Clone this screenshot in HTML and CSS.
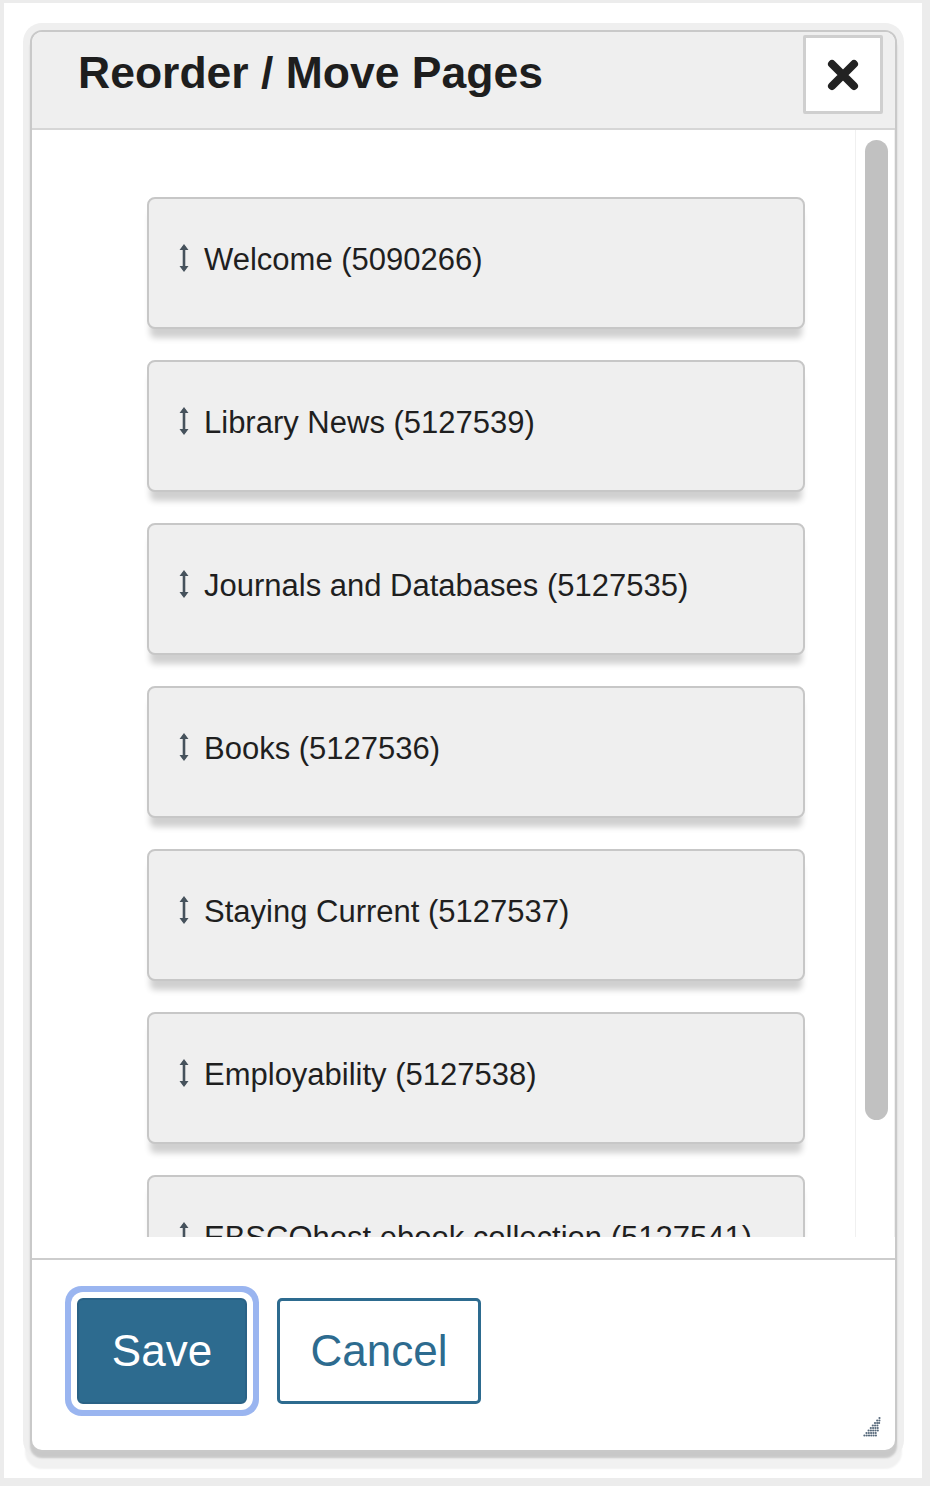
FILE: index.html
```html
<!DOCTYPE html>
<html lang="en">
<head>
<meta charset="utf-8">
<title>Reorder / Move Pages</title>
<link rel="stylesheet" href="styles.css">
</head>
<body>
<div class="frame">
  <div class="dialog">
    <div class="titlebar">
      <h1 class="title">Reorder / Move Pages</h1>
      <button class="close" aria-label="Close">
        <svg width="32" height="32" viewBox="0 0 32 32"><path d="M5 5 L27 27 M27 5 L5 27" stroke="#222" stroke-width="8" stroke-linecap="round" fill="none"/></svg>
      </button>
    </div>
    <div class="scrollarea">
      <ul class="list">
        <li class="item"><svg class="grip" width="12" height="30" viewBox="0 0 12 30"><path d="M6 3 V27" stroke="#46525c" stroke-width="2.6"/><path d="M1.5 7 L6 1 L10.5 7 Z M1.5 23 L6 29 L10.5 23 Z" fill="#46525c"/></svg><span>Welcome (5090266)</span></li>
        <li class="item"><svg class="grip" width="12" height="30" viewBox="0 0 12 30"><path d="M6 3 V27" stroke="#46525c" stroke-width="2.6"/><path d="M1.5 7 L6 1 L10.5 7 Z M1.5 23 L6 29 L10.5 23 Z" fill="#46525c"/></svg><span>Library News (5127539)</span></li>
        <li class="item"><svg class="grip" width="12" height="30" viewBox="0 0 12 30"><path d="M6 3 V27" stroke="#46525c" stroke-width="2.6"/><path d="M1.5 7 L6 1 L10.5 7 Z M1.5 23 L6 29 L10.5 23 Z" fill="#46525c"/></svg><span>Journals and Databases (5127535)</span></li>
        <li class="item"><svg class="grip" width="12" height="30" viewBox="0 0 12 30"><path d="M6 3 V27" stroke="#46525c" stroke-width="2.6"/><path d="M1.5 7 L6 1 L10.5 7 Z M1.5 23 L6 29 L10.5 23 Z" fill="#46525c"/></svg><span>Books (5127536)</span></li>
        <li class="item"><svg class="grip" width="12" height="30" viewBox="0 0 12 30"><path d="M6 3 V27" stroke="#46525c" stroke-width="2.6"/><path d="M1.5 7 L6 1 L10.5 7 Z M1.5 23 L6 29 L10.5 23 Z" fill="#46525c"/></svg><span>Staying Current (5127537)</span></li>
        <li class="item"><svg class="grip" width="12" height="30" viewBox="0 0 12 30"><path d="M6 3 V27" stroke="#46525c" stroke-width="2.6"/><path d="M1.5 7 L6 1 L10.5 7 Z M1.5 23 L6 29 L10.5 23 Z" fill="#46525c"/></svg><span>Employability (5127538)</span></li>
        <li class="item"><svg class="grip" width="12" height="30" viewBox="0 0 12 30"><path d="M6 3 V27" stroke="#46525c" stroke-width="2.6"/><path d="M1.5 7 L6 1 L10.5 7 Z M1.5 23 L6 29 L10.5 23 Z" fill="#46525c"/></svg><span>EBSCOhost ebook collection (5127541)</span></li>
      </ul>
      <div class="scrollbar"><div class="thumb"></div></div>
    </div>
    <div class="gap"></div>
    <div class="footer">
      <button class="btn save">Save</button>
      <button class="btn cancel">Cancel</button>
    </div>
    <svg class="resize" width="22" height="22" viewBox="0 0 22 22">
      <g fill="#56687a">
        <circle cx="18.5" cy="2" r="1.1"/>
        <circle cx="16.2" cy="4.5" r="1.1"/><circle cx="18.4" cy="4.5" r="1.1"/>
        <circle cx="14" cy="7" r="1.1"/><circle cx="16.2" cy="7" r="1.1"/><circle cx="18.1" cy="7" r="1.1"/>
        <circle cx="11.8" cy="9.5" r="1.1"/><circle cx="14.1" cy="9.5" r="1.1"/><circle cx="16.4" cy="9.5" r="1.1"/>
        <circle cx="9.8" cy="12" r="1.1"/><circle cx="12.1" cy="12" r="1.1"/><circle cx="14.4" cy="12" r="1.1"/><circle cx="16.7" cy="12" r="1.1"/>
        <circle cx="7.6" cy="14.5" r="1.1"/><circle cx="9.9" cy="14.5" r="1.1"/><circle cx="12.2" cy="14.5" r="1.1"/><circle cx="14.5" cy="14.5" r="1.1"/><circle cx="16.8" cy="14.5" r="1.1"/>
        <circle cx="5.5" cy="17" r="1.1"/><circle cx="7.8" cy="17" r="1.1"/><circle cx="10.1" cy="17" r="1.1"/><circle cx="12.4" cy="17" r="1.1"/><circle cx="14.7" cy="17" r="1.1"/>
        <circle cx="3.4" cy="19.5" r="1.1"/><circle cx="5.7" cy="19.5" r="1.1"/><circle cx="8" cy="19.5" r="1.1"/><circle cx="10.3" cy="19.5" r="1.1"/><circle cx="12.6" cy="19.5" r="1.1"/><circle cx="14.9" cy="19.5" r="1.1"/>
      </g>
    </svg>
  </div>
</div>
</body>
</html>
```
FILE: styles.css
```css
* { box-sizing: border-box; }
html, body { margin: 0; }
body {
  background: #ececec;
  padding: 3px 8px 8px 4px;
  font-family: "Liberation Sans", Arial, Helvetica, sans-serif;
  color: #1f1f1f;
}
.frame {
  background: #ffffff;
  height: 1475px;
  padding: 27px 0 0 26px;
}
.dialog {
  position: relative;
  width: 867px;
  height: 1422px;
  border: 2px solid #c9c9c9;
  border-radius: 12px;
  background: #ffffff;
  display: flex;
  flex-direction: column;
  box-shadow: 0 6px 2px rgba(0, 0, 0, 0.16), 0 0 0 7px #efefef, 0 12px 2px 5px #f1f1f1;
}
.titlebar {
  height: 98px;
  flex: none;
  background: #efefef;
  border-bottom: 2px solid #d6d6d6;
  border-radius: 10px 10px 0 0;
  display: flex;
  align-items: center;
  justify-content: space-between;
  padding: 0 12px 14px 46px;
}
.title {
  margin: 0;
  font-size: 44.5px;
  font-weight: bold;
  color: #1e1e1e;
}
.close {
  align-self: flex-start;
  width: 80px;
  height: 79px;
  margin-top: 3px;
  background: #ffffff;
  border: 3px solid #cfcfcf;
  border-radius: 2px;
  display: flex;
  align-items: center;
  justify-content: center;
  padding: 0;
}
.scrollarea {
  height: 1107px;
  flex: none;
  display: flex;
  overflow: hidden;
}
.list {
  flex: 1;
  list-style: none;
  margin: 0;
  padding: 67px 0 0 115px;
  overflow: hidden;
}
.item {
  width: 658px;
  height: 132px;
  margin-bottom: 31px;
  background: #efefef;
  border: 2px solid #c7c7c7;
  border-radius: 8px;
  box-shadow: 0 12px 6px -3px rgba(0, 0, 0, 0.19);
  display: flex;
  align-items: center;
  padding: 0 0 6px 29px;
  font-size: 31px;
  color: #1f1f1f;
}
.grip {
  flex: none;
  margin-right: 14px;
  margin-top: -4px;
}
.scrollbar {
  width: 40px;
  flex: none;
  border-left: 1px solid #f0f0f0;
  border-right: 1px solid #f0f0f0;
  padding: 10px 0 0 9px;
}
.thumb {
  width: 23px;
  height: 980px;
  background: #c1c1c1;
  border-radius: 12px;
}
.gap {
  height: 23px;
  flex: none;
  border-bottom: 2px solid #cdcdcd;
}
.footer {
  flex: 1;
  display: flex;
  align-items: flex-start;
  gap: 30px;
  padding: 38px 0 0 45px;
}
.btn {
  height: 106px;
  font-family: "Liberation Sans", Arial, Helvetica, sans-serif;
  font-size: 44px;
  line-height: 1;
  border-radius: 6px;
  padding: 0;
}
.save {
  width: 170px;
  background: #2d6b8f;
  color: #ffffff;
  border: 2px solid #2a6286;
  box-shadow: 0 0 0 6px #ffffff, 0 0 0 12px #9ab5f0;
}
.cancel {
  width: 204px;
  background: #ffffff;
  color: #2d6b8f;
  border: 3px solid #2d6b8f;
  border-radius: 5px;
}
.resize {
  position: absolute;
  right: 12px;
  bottom: 12px;
}
```
